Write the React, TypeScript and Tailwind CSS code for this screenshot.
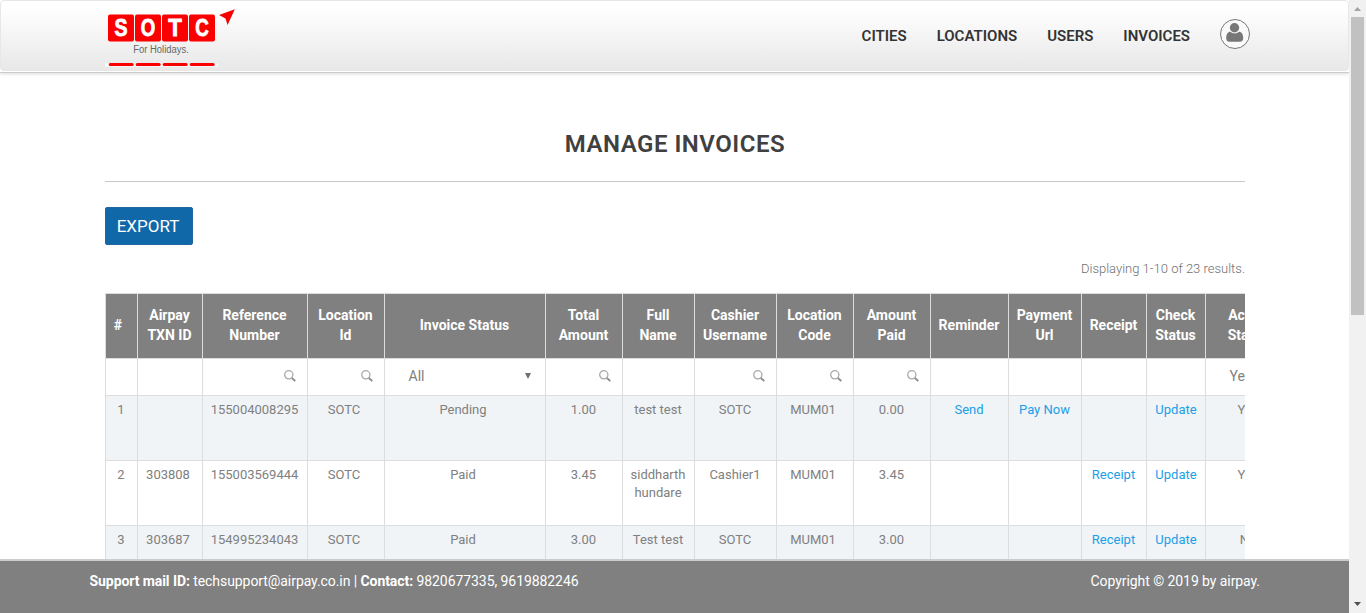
import React from "react";

const COLS =
  "grid w-[1184px] grid-cols-[32px_65px_105px_77px_161px_77px_72px_82px_77px_77px_78px_73px_65px_59px_84px]";

const headers: string[][] = [
  ["#"],
  ["Airpay", "TXN ID"],
  ["Reference", "Number"],
  ["Location", "Id"],
  ["Invoice Status"],
  ["Total", "Amount"],
  ["Full", "Name"],
  ["Cashier", "Username"],
  ["Location", "Code"],
  ["Amount", "Paid"],
  ["Reminder"],
  ["Payment", "Url"],
  ["Receipt"],
  ["Check", "Status"],
  ["Active", "Status"],
];

const filters = ["", "", "search", "search", "select", "search", "", "search", "search", "search", "", "", "", "", "active"];

const rows: string[][] = [
  ["1", "", "155004008295", "SOTC", "Pending", "1.00", "test test", "SOTC", "MUM01", "0.00", "Send", "Pay Now", "", "Update", "Yes"],
  ["2", "303808", "155003569444", "SOTC", "Paid", "3.45", "siddharth hundare", "Cashier1", "MUM01", "3.45", "", "", "Receipt", "Update", "Yes"],
  ["3", "303687", "154995234043", "SOTC", "Paid", "3.00", "Test test", "SOTC", "MUM01", "3.00", "", "", "Receipt", "Update", "No"],
];

function cellPadding(i: number) {
  if (i === 13) return "";
  if (i === 14) return "pl-px";
  if (i === 1 || i === 3 || i === 4 || i === 8) return "pr-1";
  return "pr-px";
}

function SearchIcon() {
  return (
    <svg width="12" height="12" viewBox="0 0 12 12" fill="none">
      <circle cx="4.8" cy="4.8" r="4.1" stroke="#a8a8a8" strokeWidth="1.3" />
      <path d="M7.8 8 11.3 11" stroke="#8c8c8c" strokeWidth="1.8" />
    </svg>
  );
}

function Logo() {
  return (
    <svg width="132" height="62" viewBox="0 0 132 62">
      <rect x="0" y="54.5" width="113" height="3" fill="#fff" />
      {["S", "O", "T", "C"].map((c, i) => (
        <g key={c}>
          <rect x={3 + i * 27} y="5.5" width="26" height="27" rx="2" fill="#fa0000" />
          <text
            x={16 + i * 27}
            y="27.3"
            textAnchor="middle"
            fontFamily="Liberation Sans, sans-serif"
            fontWeight="bold"
            fontSize="24.5"
            fill="#fff"
            stroke="#fff"
            strokeWidth="0.9"
            textLength={c === "O" ? 14.5 : c === "S" ? 13 : 13.5}
            lengthAdjust="spacingAndGlyphs"
          >
            {c}
          </text>
          <rect x={3.7 + i * 27} y="54" width="25" height="3" rx="1.5" fill="#fa0000" />
        </g>
      ))}
      <text
        x="28.3"
        y="43.7"
        fontFamily="Liberation Sans, sans-serif"
        fontSize="10"
        fill="#666"
        textLength="55.5"
        lengthAdjust="spacingAndGlyphs"
      >
        For Holidays.
      </text>
      <path d="M129.8 0.2 114 6 120.5 9.5 122.6 16Z" fill="#fa0000" />
    </svg>
  );
}

function Avatar() {
  return (
    <svg width="30" height="30" viewBox="0 0 30 30" fill="none">
      <circle cx="15" cy="15" r="14.5" fill="#fafafa" stroke="#777" />
      <circle cx="14.5" cy="8.7" r="4.7" fill="#777" />
      <path d="M10.5 12.7c1.1 1.1 2.5 1.7 4.2 1.7s3.1-.6 4.2-1.7c2.8 0 4.3 2.4 4.3 6.5 0 2.3-1.4 3.6-3.4 3.6h-10.2c-2 0-3.4-1.3-3.4-3.6 0-4.1 1.5-6.5 4.3-6.5Z" fill="#777" />
    </svg>
  );
}

function Filter({ kind }: { kind: string }) {
  if (kind === "search")
    return (
      <div className="flex h-full items-center justify-end pr-[11px] pb-0.5">
        <SearchIcon />
      </div>
    );
  if (kind === "select")
    return (
      <div className="flex h-full items-center justify-between pr-3.5 pb-0.5 pl-[23.5px] text-sm">
        <span>All</span>
        <svg width="6" height="6" viewBox="0 0 6 6">
          <path d="M0 0h6L3 6Z" fill="#707070" />
        </svg>
      </div>
    );
  if (kind === "active") return <div className="flex h-full items-center pb-0.5 pl-[23.5px] text-sm">Yes</div>;
  return null;
}

export default function App() {
  return (
    <div className="flex h-[613px] w-full overflow-hidden bg-white font-['Roboto',sans-serif] text-[#808080]">
      <div className="flex min-w-0 flex-1 flex-col">
        <header className="h-[73px] shrink-0 border-b border-[#ccc] bg-white shadow-[0_1px_3px_rgba(0,0,0,0.15)]">
          <div className="flex h-[71px] justify-between rounded-[4px] border border-[#e7e7e7] bg-linear-to-b from-white from-10% to-[#e8e8e8] pr-[98px] pl-[104px]">
            <div className="pt-2">
              <Logo />
            </div>
            <nav className="flex h-[69px] items-center gap-[30px] text-[15px] font-semibold text-[#333]">
              <a className="pt-0.5">CITIES</a>
              <a className="pt-0.5">LOCATIONS</a>
              <a className="pt-0.5">USERS</a>
              <a className="pt-0.5">INVOICES</a>
              <a className="-mt-1">
                <Avatar />
              </a>
            </nav>
          </div>
        </header>

        <main className="min-h-0 flex-1 overflow-hidden pr-[104px] pl-[105px]">
          <h1 className="flex h-[109px] items-center justify-center border-b border-[#c8c8c8] pt-[33px] text-2xl font-semibold tracking-[0.5px] text-[#404040]">
            MANAGE INVOICES
          </h1>
          <button className="mt-[25px] flex h-[38px] w-[88px] items-center justify-center rounded-[2px] border border-[#2166a0] bg-[#1168a9] pt-0.5 pr-0.5 text-[17px] text-white">
            EXPORT
          </button>
          <p className="mt-3.5 text-right text-[13px] leading-5 font-light text-[#707070]">Displaying 1-10 of 23 results.</p>
          <div className="mt-3.5 h-[300px] overflow-hidden">
            <div className={COLS + " h-[66px] border-y border-[#ddd] bg-[#808080] text-sm leading-5 font-bold text-white"}>
              {headers.map((lines, i) => (
                <div
                  key={i}
                  className={
                    "flex flex-col items-center justify-center border-l border-[#ddd] pb-0.5 " +
                    (i === 0 ? "pr-[7px]" : i === 14 ? "pl-px" : "pr-px")
                  }
                >
                  {lines.map((l) => (
                    <span key={l} className="whitespace-nowrap">{l}</span>
                  ))}
                </div>
              ))}
            </div>
            <div className={COLS + " h-[37px] border-b border-[#ddd] bg-white"}>
              {filters.map((f, i) => (
                <div key={i} className="border-l border-[#ddd]">
                  <Filter kind={f} />
                </div>
              ))}
            </div>
            {rows.map((r, n) => (
              <div
                key={n}
                className={COLS + " h-[65px] border-b border-[#ddd] text-[13px] leading-[18px] " + (n % 2 === 0 ? "bg-[#f0f4f7]" : "bg-white")}
              >
                {r.map((v, i) => (
                  <div
                    key={i}
                    className={
                      "border-l border-[#ddd] pt-[5px] text-center " + cellPadding(i) + (i >= 10 && i <= 13 ? " text-[#1a9fe8]" : "")
                    }
                  >
                    {v}
                  </div>
                ))}
              </div>
            ))}
          </div>
        </main>

        <footer className="flex h-[54px] shrink-0 justify-between border-t-2 border-[#ccc] bg-[#808080] pt-2.5 pr-[89px] pl-[89.5px] text-sm leading-5 tracking-[-0.07px] text-white">
          <p>
            <b>Support mail ID:</b> techsupport@airpay.co.in | <b>Contact:</b> 9820677335, 9619882246
          </p>
          <p>Copyright © 2019 by airpay.</p>
        </footer>
      </div>

      <aside className="flex w-[17px] shrink-0 flex-col items-center justify-between bg-[#f1f1f1]">
        <div className="flex flex-col items-center">
          <svg width="17" height="17" viewBox="0 0 17 17">
            <path d="M5 11h7L8.5 7Z" fill="#a3a3a3" />
          </svg>
          <div className="h-[298px] w-[13px] bg-[#c1c1c1]" />
        </div>
        <svg width="17" height="17" viewBox="0 0 17 17">
          <path d="M5 6h7L8.5 10Z" fill="#505050" />
        </svg>
      </aside>
    </div>
  );
}
